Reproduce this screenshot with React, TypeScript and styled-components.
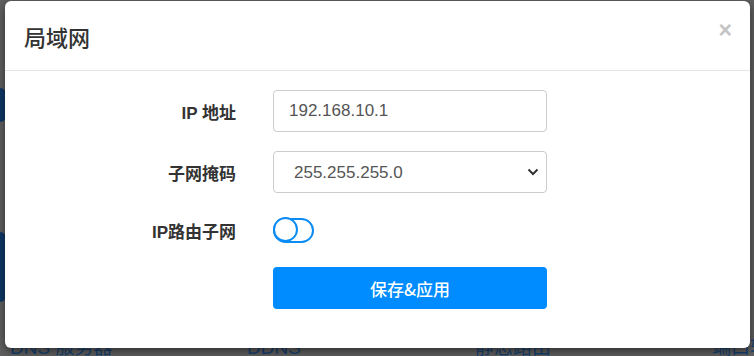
import { useState } from 'react';
import styled, { createGlobalStyle } from 'styled-components';

const GlobalStyle = createGlobalStyle`
  html, body {
    margin: 0;
    padding: 0;
    background: #5f5f5f;
  }
  body {
    font-family: "Liberation Sans", "Noto Sans CJK SC", Arial, sans-serif;
  }
`;

const Page = styled.div`
  position: relative;
  width: 754px;
  height: 356px;
  overflow: hidden;
  background: #5f5f5f;
`;

const Backdrop = styled.div`
  display: flex;
  flex-direction: column;
  height: 100%;
`;

const Blob = styled.div<{ $top: number; $height: number }>`
  margin-top: ${p => p.$top}px;
  width: 6px;
  height: ${p => p.$height}px;
  background: #0d3766;
  border-radius: 0 30px 30px 0;
`;

const NavRow = styled.div`
  margin-top: auto;
  display: grid;
  grid-template-columns: 237px 228px 237px 1fr;
  padding-left: 10px;
  height: 18px;
  line-height: 20px;
  font-size: 19px;
  color: #16406f;
  white-space: nowrap;
`;

const NavItem = styled.div`
  overflow: hidden;
`;

const Modal = styled.div`
  position: absolute;
  left: 5px;
  top: 1px;
  width: 745px;
  height: 347px;
  background: #fff;
  border-radius: 6px;
  box-shadow: 0 3px 9px rgba(0, 0, 0, 0.5);
  display: flex;
  flex-direction: column;
`;

const Header = styled.div`
  display: flex;
  align-items: center;
  justify-content: space-between;
  height: 69px;
  padding: 0 18px 0 19px;
  border-bottom: 1px solid #e5e5e5;
`;

const Title = styled.h4`
  margin: 0;
  font-size: 22px;
  font-weight: 500;
  color: #333;
  font-family: "Noto Sans CJK SC", sans-serif;
`;

const Close = styled.button`
  border: 0;
  background: none;
  padding: 0;
  margin-top: -10px;
  font-size: 23px;
  font-weight: bold;
  line-height: 1;
  color: #c4c4c4;
  font-family: "Liberation Sans", Arial, sans-serif;
  cursor: pointer;
`;

const Body = styled.div`
  display: grid;
  grid-template-columns: 231px 274px;
  column-gap: 37px;
  row-gap: 19px;
  padding-top: 19px;
  align-items: center;
`;

const Label = styled.label`
  text-align: right;
  font-size: 17px;
  font-weight: bold;
  color: #333;
  font-family: "Liberation Sans", "Noto Sans CJK SC", sans-serif;
`;

const Field = styled.input`
  box-sizing: border-box;
  width: 274px;
  height: 42px;
  padding: 0 15px;
  border: 1px solid #ccc;
  border-radius: 4px;
  font-size: 17px;
  color: #555;
  font-family: "Liberation Sans", Arial, sans-serif;
  outline: none;
`;

const SelectWrap = styled.div`
  position: relative;
  width: 274px;
  height: 42px;
`;

const Select = styled.select`
  box-sizing: border-box;
  width: 100%;
  height: 100%;
  padding: 0 0 0 20px;
  border: 1px solid #ccc;
  border-radius: 4px;
  font-size: 17px;
  color: #555;
  background: #fff;
  appearance: none;
  font-family: "Liberation Sans", Arial, sans-serif;
  outline: none;
`;

const Chevron = styled.svg`
  position: absolute;
  right: 8px;
  top: 17px;
  pointer-events: none;
`;

const ToggleCell = styled.div`
  display: flex;
  align-items: center;
  height: 36px;
`;

const Toggle = styled.button<{ $on: boolean }>`
  position: relative;
  box-sizing: border-box;
  width: 41px;
  height: 25px;
  padding: 0;
  border: 2.5px solid #0b8cf5;
  border-radius: 13px;
  background: ${p => (p.$on ? '#0b8cf5' : '#fff')};
  cursor: pointer;
`;

const Knob = styled.span<{ $on: boolean }>`
  position: absolute;
  top: -2.5px;
  left: ${p => (p.$on ? '13px' : '-2.5px')};
  box-sizing: border-box;
  width: 25px;
  height: 25px;
  border: 2.5px solid #0b8cf5;
  border-radius: 50%;
  background: #fff;
`;

const SaveButton = styled.button`
  grid-column: 2;
  height: 42px;
  border: 0;
  border-radius: 4px;
  background: #008cff;
  color: #fff;
  font-size: 17px;
  font-weight: 500;
  font-family: "Noto Sans CJK SC", sans-serif;
  cursor: pointer;
`;

export default function App() {
  const [routed, setRouted] = useState(false);
  return (
    <Page>
      <GlobalStyle />
      <Backdrop>
        <Blob $top={88} $height={34} />
        <Blob $top={110} $height={70} />
        <NavRow>
          <NavItem>DNS 服务器</NavItem>
          <NavItem>DDNS</NavItem>
          <NavItem>静态路由</NavItem>
          <NavItem>端口转发</NavItem>
        </NavRow>
      </Backdrop>
      <Modal>
        <Header>
          <Title>局域网</Title>
          <Close>×</Close>
        </Header>
        <Body>
          <Label>IP 地址</Label>
          <Field defaultValue="192.168.10.1" />
          <Label>子网掩码</Label>
          <SelectWrap>
            <Select defaultValue="255.255.255.0">
              <option>255.255.255.0</option>
              <option>255.255.0.0</option>
              <option>255.0.0.0</option>
            </Select>
            <Chevron width="12" height="8" viewBox="0 0 12 8">
              <path d="M1.5 1.5 L6 6 L10.5 1.5" fill="none" stroke="#333" strokeWidth="2" />
            </Chevron>
          </SelectWrap>
          <Label>IP路由子网</Label>
          <ToggleCell>
            <Toggle $on={routed} onClick={() => setRouted(!routed)}>
              <Knob $on={routed} />
            </Toggle>
          </ToggleCell>
          <SaveButton>保存&amp;应用</SaveButton>
        </Body>
      </Modal>
    </Page>
  );
}
